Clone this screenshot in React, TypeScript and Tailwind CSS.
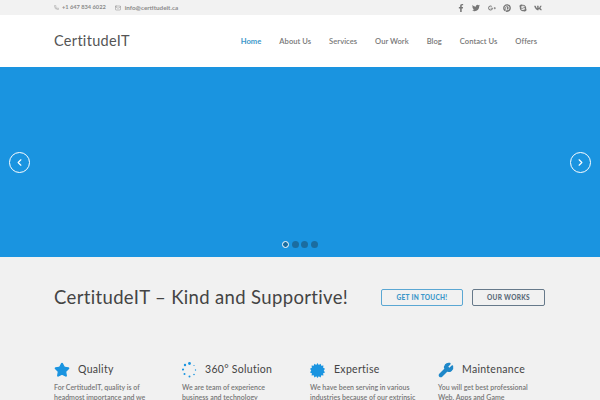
import { Phone, Mail, Star, Wrench, ChevronLeft, ChevronRight } from "lucide-react";
import { FaFacebookF, FaTwitter, FaGooglePlusG, FaPinterest, FaSkype, FaVk } from "react-icons/fa";

const nav = [
  ["Home", "text-[#3b97c9] font-bold"],
  ["About Us", ""],
  ["Services", ""],
  ["Our Work", ""],
  ["Blog", ""],
  ["Contact Us", ""],
  ["Offers", ""],
];

const Spinner = () => (
  <svg width="15" height="16" viewBox="0 0 15 16" className="shrink-0 text-[#1a94e0]" fill="currentColor">
    <circle cx="7.5" cy="1.5" r="1.4" />
    <circle cx="3" cy="3" r="1.2" />
    <circle cx="1" cy="7.5" r="1.1" />
    <circle cx="2.5" cy="12" r="1" />
    <circle cx="7.5" cy="14.5" r="1" />
    <circle cx="12" cy="12.5" r="0.8" />
    <circle cx="13.5" cy="8" r="0.7" />
    <circle cx="12" cy="3.5" r="0.6" />
  </svg>
);

const Burst = () => (
  <svg width="15" height="15" viewBox="0 0 24 24" className="shrink-0 text-[#1a94e0]" fill="currentColor">
    <polygon points="12,0 14,3 17,1 18,4.5 21.5,4 21,7.5 24,9 22,12 24,15 21,16.5 21.5,20 18,19.5 17,23 14,21 12,24 10,21 7,23 6,19.5 2.5,20 3,16.5 0,15 2,12 0,9 3,7.5 2.5,4 6,4.5 7,1 10,3" />
  </svg>
);

const features = [
  { icon: <Star size={16} className="shrink-0 text-[#1a94e0]" fill="currentColor" />, gap: "gap-[8px]", title: "Quality", lines: ["For CertitudeIT, quality is of", "headmost importance and we"] },
  { icon: <Spinner />, gap: "gap-[8px]", title: "360° Solution", lines: ["We are team of experience", "business and technology"] },
  { icon: <Burst />, gap: "gap-[9px]", title: "Expertise", lines: ["We have been serving in various", "industries because of our extrinsic"] },
  { icon: <Wrench size={16} className="shrink-0 text-[#1f88c9]" fill="currentColor" />, gap: "gap-[8px]", title: "Maintenance", lines: ["You will get best professional", "Web, Apps and Game"] },
];

const socials = [FaFacebookF, FaTwitter, FaGooglePlusG, FaPinterest, FaSkype, FaVk];

export default function App() {
  return (
    <div className="w-[600px] h-[400px] overflow-hidden bg-[#f1f1f1] font-['Lato',sans-serif]">
      <div className="h-[15px] bg-[#f2f2f2] flex items-center justify-between pl-[54px] pr-[54px] text-[#8a8a8a]">
        <div className="flex items-center font-bold">
          <Phone size={5} className="mr-[3px]" />
          <span className="mr-[9px] text-[5.7px]">+1 647 834 6022</span>
          <Mail size={6} className="mr-[4px]" />
          <span className="text-[6.3px]">info@certitudeit.ca</span>
        </div>
        <div className="flex items-center text-[8px] text-[#777]">
          {socials.map((Icon, i) => (
            <span key={i} className="w-[15.5px] flex justify-center"><Icon /></span>
          ))}
        </div>
      </div>
      <header className="h-[52px] bg-white flex items-center justify-between pl-[54px] pr-[63px]">
        <div className="text-[14.5px] tracking-[0.3px] text-[#555]">CertitudeIT</div>
        <nav className="flex gap-[18px] pt-[1px] text-[7.6px] tracking-[0.03px] font-semibold text-[#777]">
          {nav.map(([t, c]) => (
            <span key={t} className={c}>{t}</span>
          ))}
        </nav>
      </header>
      <section className="relative h-[190px] bg-[#1a94e0] flex items-center justify-between px-[9px]">
        <div className="w-[21px] h-[21px] rounded-full border border-white flex items-center justify-center text-white">
          <ChevronLeft size={11} strokeWidth={2.5} />
        </div>
        <div className="w-[21px] h-[21px] rounded-full border border-white flex items-center justify-center text-white">
          <ChevronRight size={11} strokeWidth={2.5} />
        </div>
        <div className="absolute left-[282px] bottom-[9px] flex gap-[2.5px]">
          <span className="w-[7px] h-[7px] rounded-full bg-[#1b6ca0] border border-white" />
          <span className="w-[7px] h-[7px] rounded-full bg-[#1b6ca0]" />
          <span className="w-[7px] h-[7px] rounded-full bg-[#1b6ca0]" />
          <span className="w-[7px] h-[7px] rounded-full bg-[#1b6ca0]" />
        </div>
      </section>
      <section className="pl-[54px] pt-[32px] flex items-center justify-between pr-[55px]">
        <h1 className="text-[18.5px] tracking-[0.35px] leading-[17px] text-[#444]">CertitudeIT – Kind and Supportive!</h1>
        <div className="flex gap-[9px]">
          <button className="w-[82px] h-[17px] border border-[#5aa7d3] rounded-[2px] text-[6.5px] font-black tracking-[0.3px] text-[#3b97c9]">GET IN TOUCH!</button>
          <button className="w-[73px] h-[17px] border border-[#66798a] rounded-[2px] text-[6.5px] font-black tracking-[0.3px] text-[#5a6a78]">OUR WORKS</button>
        </div>
      </section>
      <section className="pl-[54px] pt-[55px] grid grid-cols-[128px_128px_128px_128px]">
        {features.map((f) => (
          <div key={f.title}>
            <div className={`flex items-center h-[18px] ${f.gap}`}>
              {f.icon}
              <span className="text-[10.5px] tracking-[0.3px] text-[#444]">{f.title}</span>
            </div>
            <div className="mt-[3px] text-[7px] font-semibold leading-[10px] text-[#777]">
              {f.lines.map((l) => <div key={l}>{l}</div>)}
            </div>
          </div>
        ))}
      </section>
    </div>
  );
}
